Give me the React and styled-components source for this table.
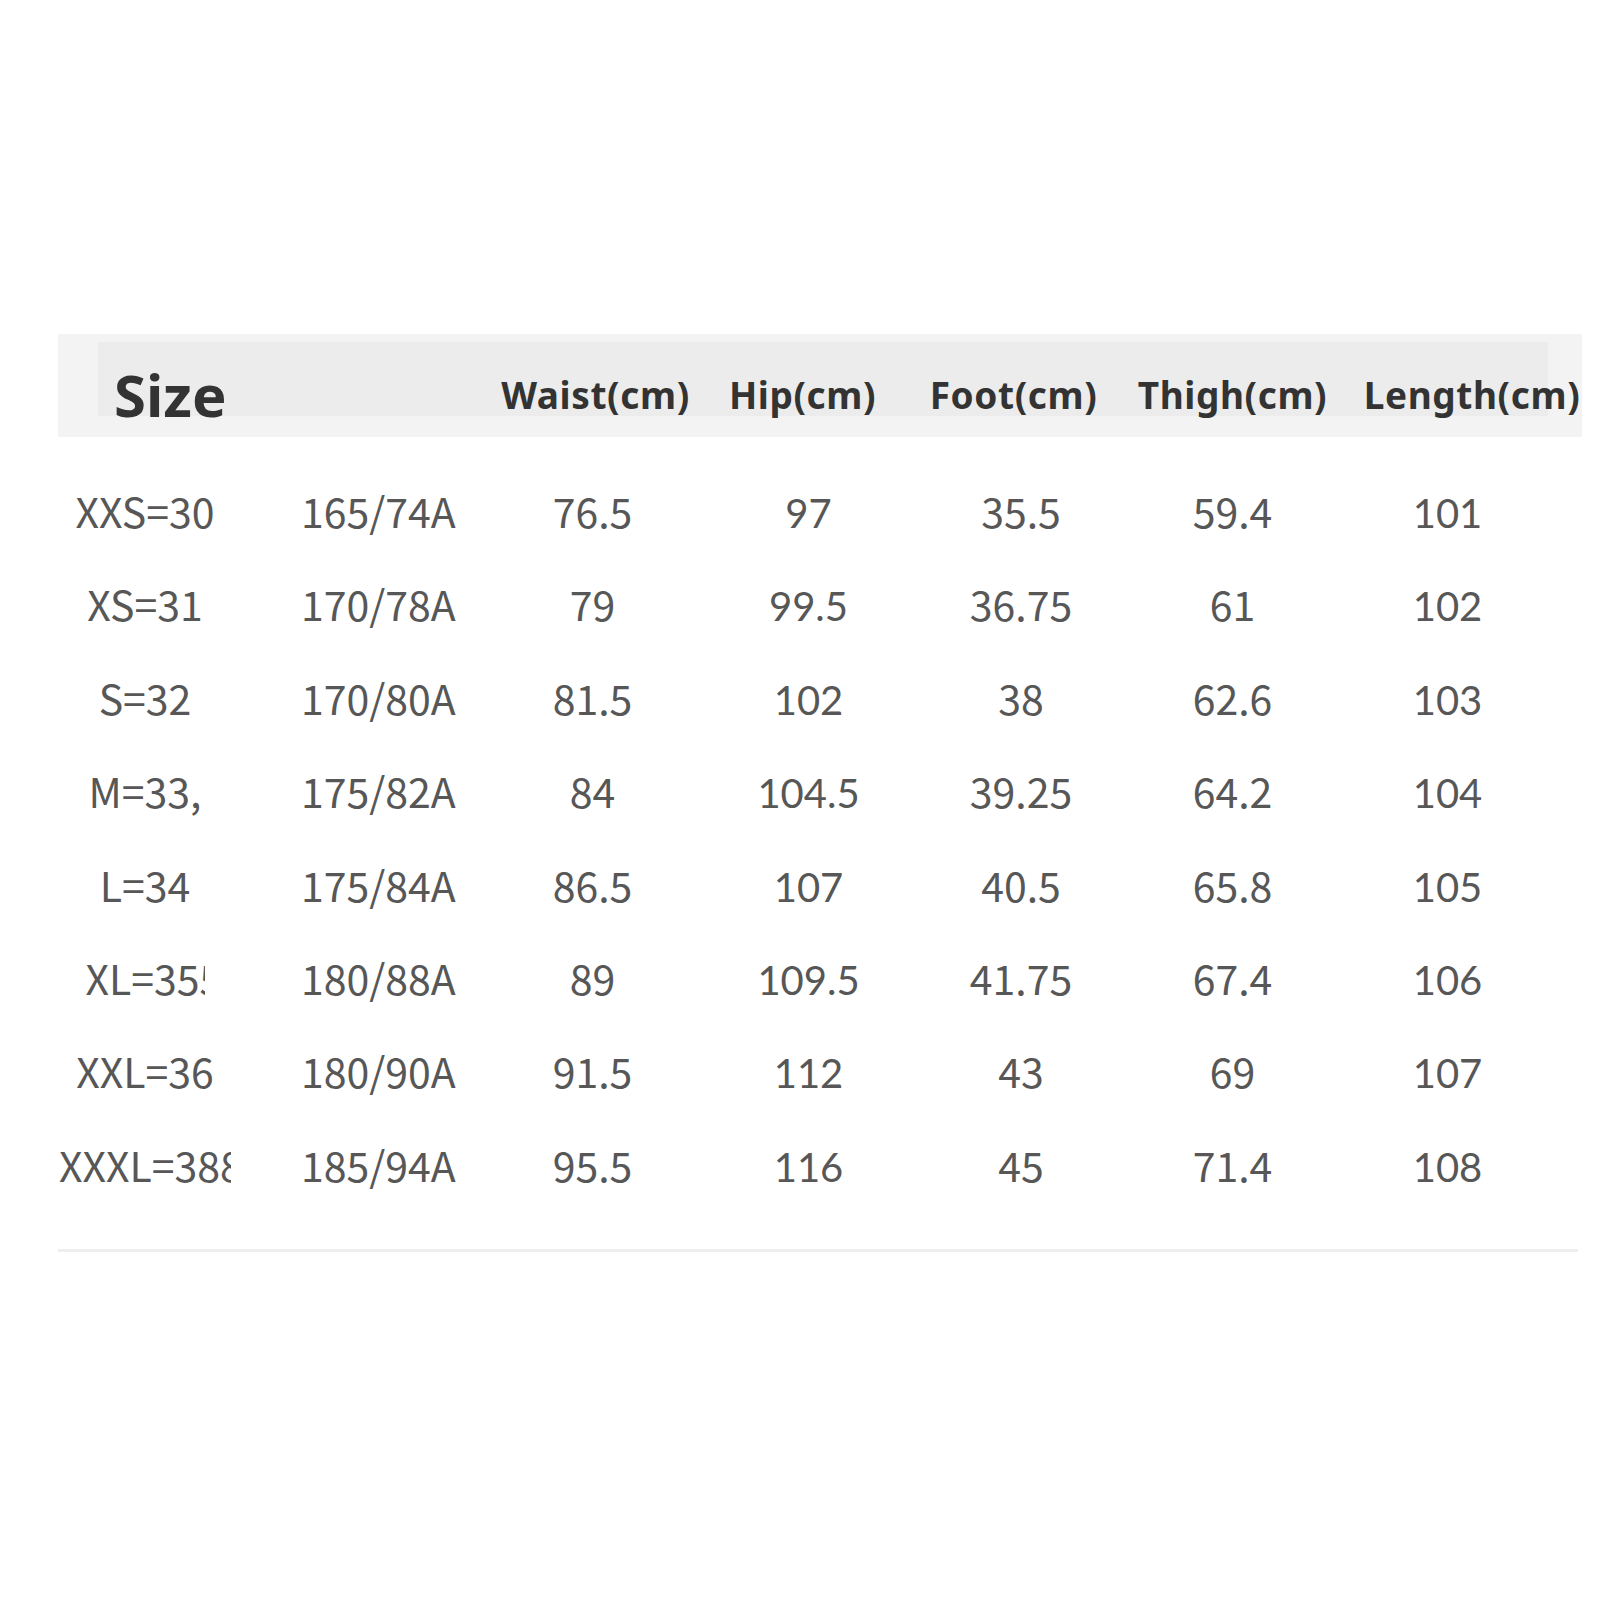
import React from "react";
import styled, { createGlobalStyle } from "styled-components";

const GlobalStyle = createGlobalStyle`
  html, body {
    margin: 0;
    padding: 0;
    background: #ffffff;
  }
  body {
    width: 1600px;
    min-height: 1600px;
    font-family: "Noto Sans", "Noto Sans CJK SC", sans-serif;
  }
`;

const headers = [
  { label: "Waist(cm)" },
  { label: "Hip(cm)" },
  { label: "Foot(cm)" },
  { label: "Thigh(cm)" },
  { label: "Length(cm)" },
];

// which font each column uses (hip and length columns use a footed "1")
const columnFonts = ["cjk", "cjk", "cjk", "lato", "cjk", "cjk", "lato"];

const rows = [
  { size: "XXS=30", cells: ["165/74A", "76.5", "97", "35.5", "59.4", "101"] },
  { size: "XS=31", cells: ["170/78A", "79", "99.5", "36.75", "61", "102"] },
  { size: "S=32", cells: ["170/80A", "81.5", "102", "38", "62.6", "103"] },
  { size: "M=33,", cells: ["175/82A", "84", "104.5", "39.25", "64.2", "104"] },
  { size: "L=34", cells: ["175/84A", "86.5", "107", "40.5", "65.8", "105"] },
  { size: "XL=355", clip: 119, cells: ["180/88A", "89", "109.5", "41.75", "67.4", "106"] },
  { size: "XXL=36", cells: ["180/90A", "91.5", "112", "43", "69", "107"] },
  { size: "XXXL=388", clip: 172, cells: ["185/94A", "95.5", "116", "45", "71.4", "108"] },
];

const SizeChart = () => {
  return (
    <Page>
      <GlobalStyle />
      <Chart>
        <HeaderBand>
          <SizeTitle>Size</SizeTitle>
          {headers.map((item, index) => (
            <HeadLabel key={`head-${index}`}>{item.label}</HeadLabel>
          ))}
        </HeaderBand>
        <Body>
          {rows.map((row, index) => (
            <Row key={`row-${index}`}>
              <Cell $font="cjk">
                <SizeLabel $clip={row.clip}>{row.size}</SizeLabel>
              </Cell>
              {row.cells.map((value, i) => (
                <Cell
                  key={`cell-${index}-${i}`}
                  $font={columnFonts[i + 1]}
                  $left={i === 0}
                >
                  {value}
                </Cell>
              ))}
            </Row>
          ))}
        </Body>
        <BottomRule />
      </Chart>
    </Page>
  );
};

export default SizeChart;

const Page = styled.main`
  padding: 334px 0 0 58px;
`;

const Chart = styled.section`
  width: 1524px;
  display: flex;
  flex-direction: column;
`;

const HeaderBand = styled.header`
  position: relative;
  height: 103px;
  box-sizing: border-box;
  background: #f3f3f3;
  display: grid;
  grid-template-columns: 430px 215px 199px 223px 215px 264px;
  align-items: end;
  padding-bottom: 13px;
  color: #333333;
  font-family: "Noto Sans", sans-serif;
  font-weight: 700;
  &::before {
    content: "";
    position: absolute;
    top: 8px;
    left: 40px;
    right: 34px;
    bottom: 21px;
    background: #ececec;
  }
`;

const SizeTitle = styled.h2`
  position: relative;
  margin: 0;
  padding-left: 56px;
  font-size: 58px;
  line-height: 1;
  font-weight: 700;
`;

const HeadLabel = styled.div`
  position: relative;
  text-align: center;
  white-space: nowrap;
  font-size: 37px;
  line-height: 1;
  letter-spacing: 0.6px;
  margin-bottom: 11px;
`;

const Body = styled.div`
  padding-top: 49px;
  display: flex;
  flex-direction: column;
`;

const Row = styled.div`
  display: grid;
  grid-template-columns: 174px 253px 215px 217px 208px 215px 215px;
  align-items: baseline;
  height: 93.4px;
  color: #575757;
`;

const Cell = styled.div`
  font-family: ${({ $font }) =>
    $font === "lato"
      ? `Lato, "Noto Sans", sans-serif`
      : `"Noto Sans CJK SC", "Noto Sans", sans-serif`};
  font-size: ${({ $font }) => ($font === "lato" ? "40px" : "41px")};
  line-height: 1.2;
  text-align: ${({ $left }) => ($left ? "left" : "center")};
  padding-left: ${({ $left }) => ($left ? "69px" : "0")};
  white-space: nowrap;
`;

const SizeLabel = styled.span`
  display: inline-block;
  vertical-align: top;
  line-height: inherit;
  white-space: nowrap;
  overflow: ${({ $clip }) => ($clip ? "hidden" : "visible")};
  max-width: ${({ $clip }) => ($clip ? `${$clip}px` : "none")};
`;

const BottomRule = styled.div`
  margin-top: 16px;
  width: 1520px;
  height: 3px;
  background: #eeeeee;
`;
